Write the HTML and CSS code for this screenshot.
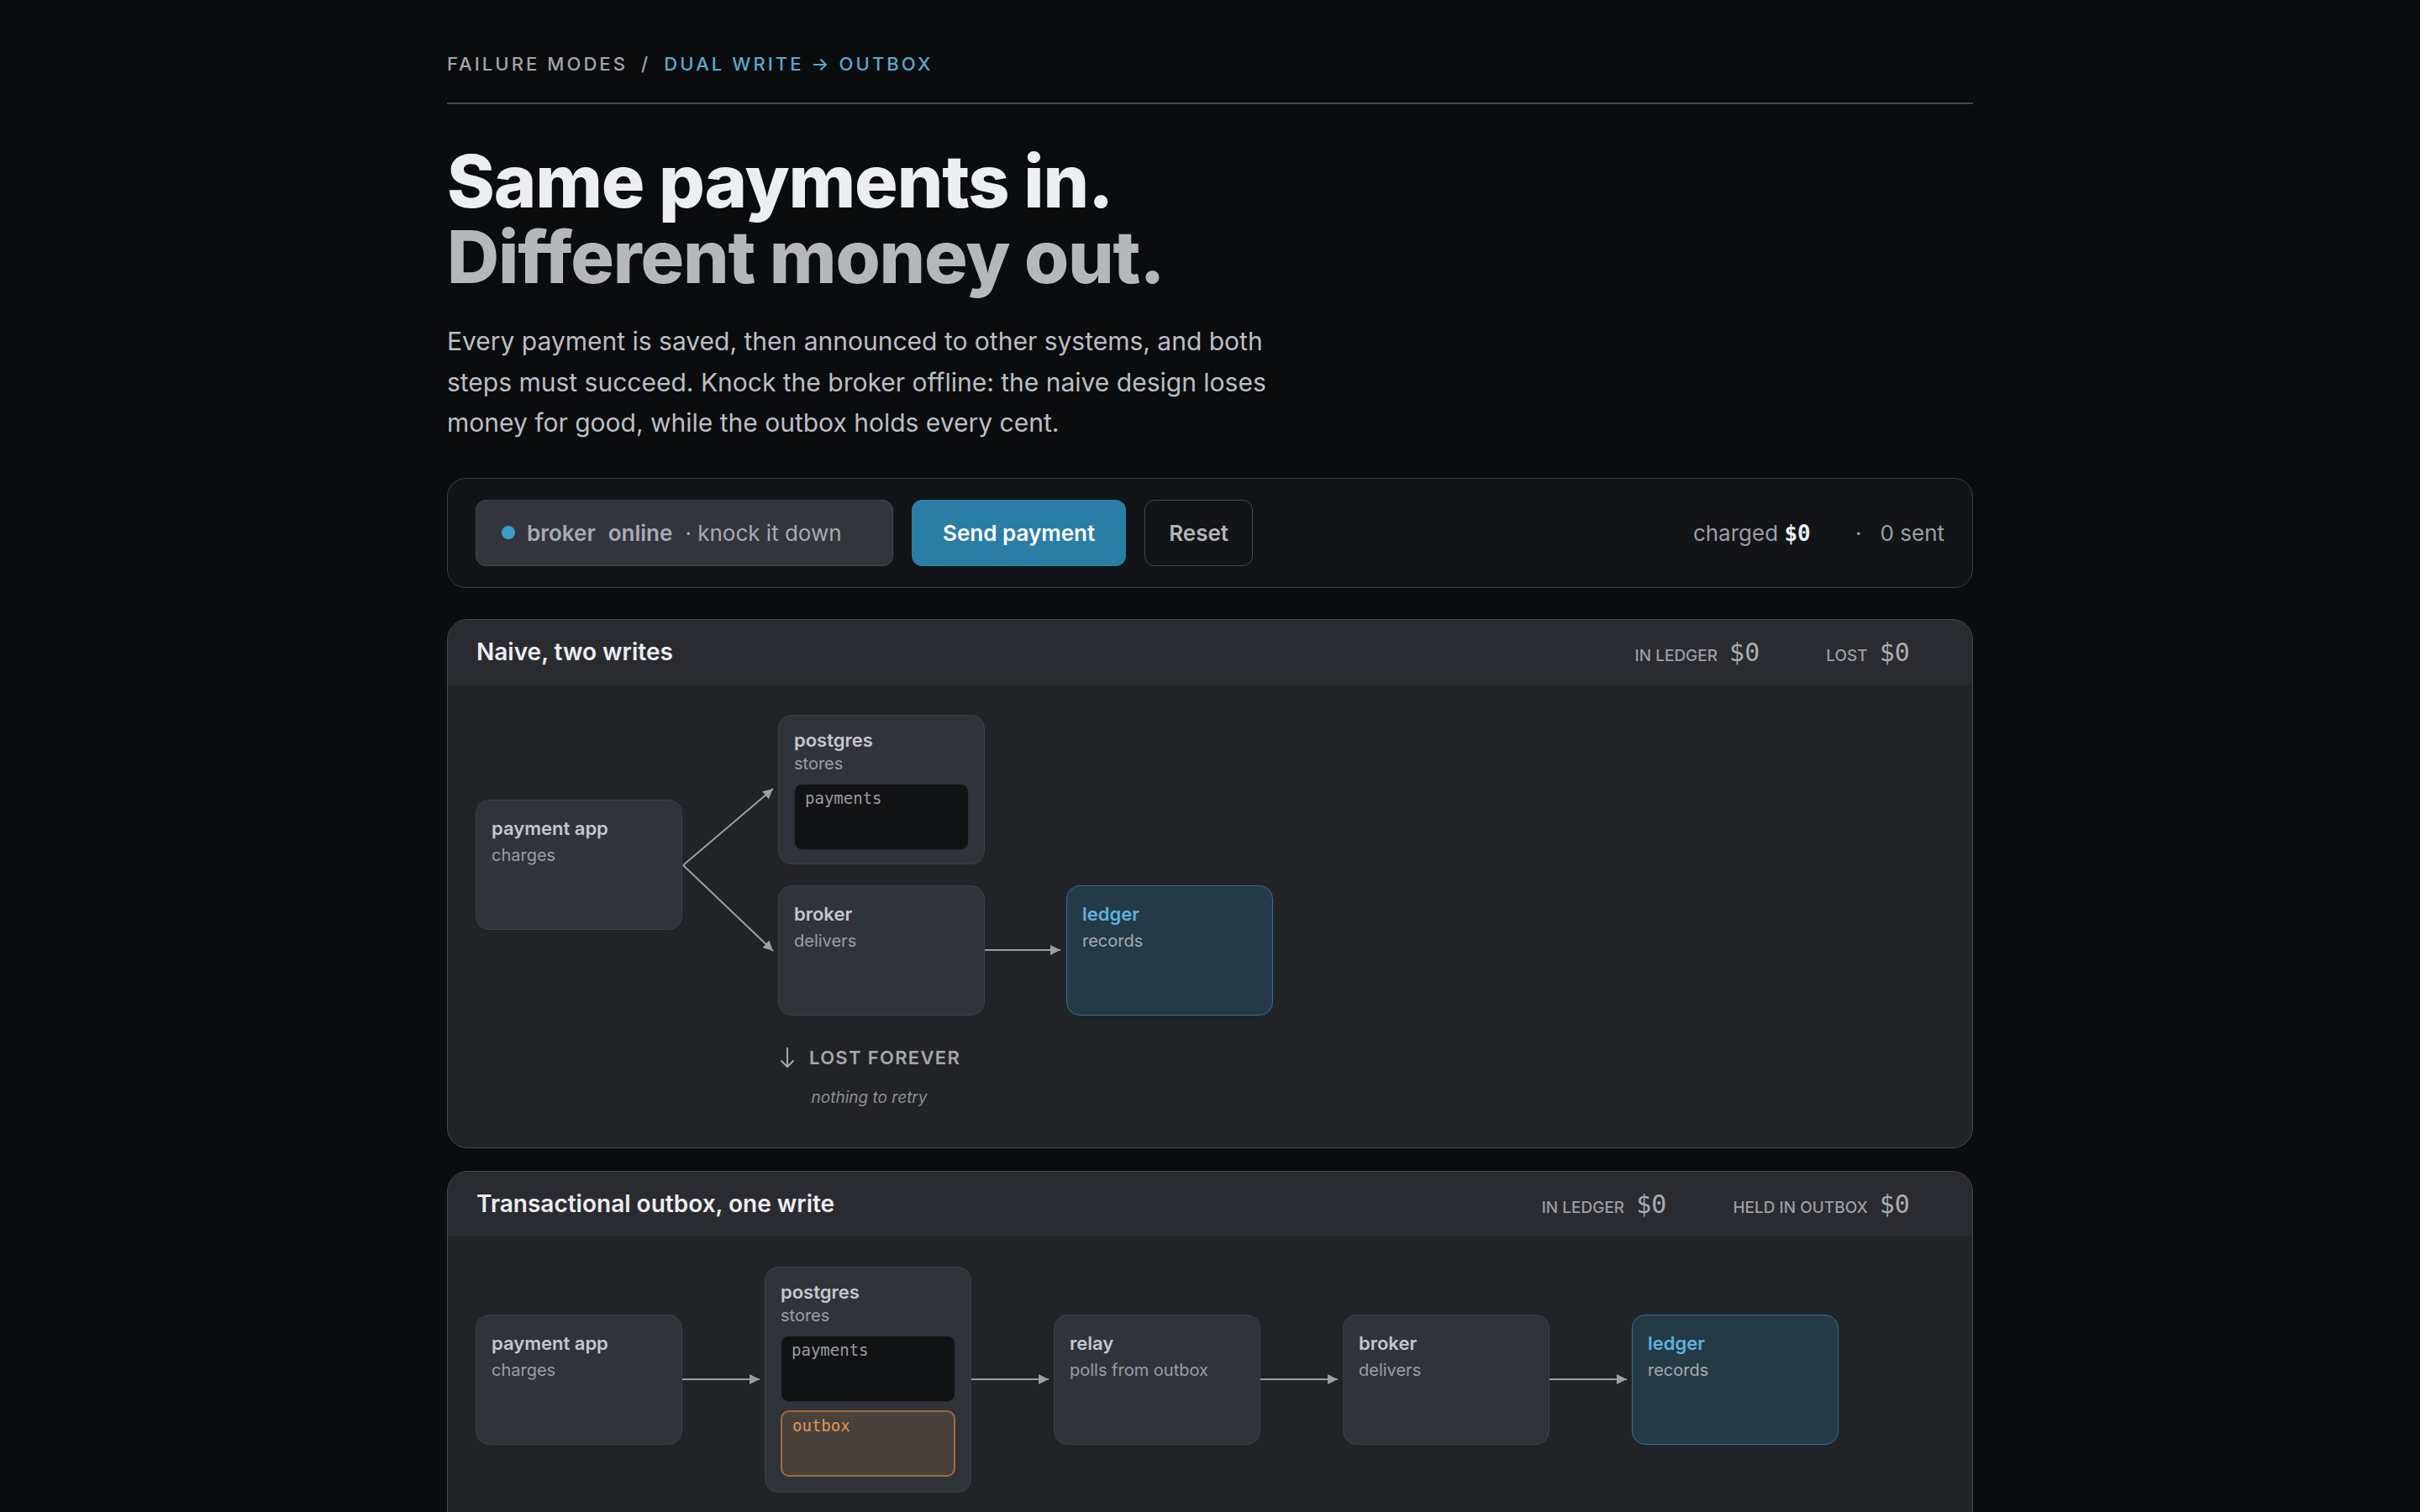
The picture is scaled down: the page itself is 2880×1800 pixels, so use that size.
FILE: index.html
```html
<!DOCTYPE html>
<html lang="en">
<head>
  <meta charset="UTF-8" />
  <meta name="viewport" content="width=device-width, initial-scale=1.0"/>
  <title>Failure modes: dual write vs outbox</title>
  <link rel="stylesheet" href="styles.css">
</head>
<body>
  <main class="page">
    <nav class="crumbs">
      <span>Failure modes</span>
      <span class="crumb-sep">/</span>
      <span class="crumb-current">Dual write → outbox</span>
    </nav>

    <h1 class="headline">
      <span class="headline-in">Same payments in.</span>
      <span class="headline-out">Different money out.</span>
    </h1>

    <p class="lede">Every payment is saved, then announced to other systems, and both steps must succeed. Knock the broker offline: the naive design loses money for good, while the outbox holds every cent.</p>

    <!-- controls -->
    <div class="controls">
      <button type="button" class="toggle">
        <span class="dot"></span>
        <b>broker</b>
        <b>online</b>
        <span>· knock it down</span>
      </button>
      <button type="button" class="btn btn-primary">Send payment</button>
      <button type="button" class="btn btn-ghost">Reset</button>
      <div class="totals">
        <span>charged <b class="money">$0</b></span>
        <span>·</span>
        <span>0 sent</span>
      </div>
    </div>

    <!-- naive: two writes -->
    <section class="card">
      <header class="card-head">
        <h2>Naive, two writes</h2>
        <div class="stats">
          <div class="stat"><span class="stat-label">In ledger</span><span class="stat-value">$0</span></div>
          <div class="stat"><span class="stat-label">Lost</span><span class="stat-value">$0</span></div>
        </div>
      </header>
      <div class="card-body">
        <div class="naive">
          <div class="node node-app">
            <div class="node-name">payment app</div>
            <div class="node-role">charges</div>
          </div>

          <svg class="fork" viewBox="0 0 114 358" width="114" height="358">
            <defs>
              <marker id="tip" viewBox="0 0 12 12" refX="12" refY="6" markerWidth="12" markerHeight="12" markerUnits="userSpaceOnUse" orient="auto">
                <path d="M0,0 L12,6 L0,12 z" fill="#9c9ea3"/>
              </marker>
            </defs>
            <line x1="1" y1="179" x2="108" y2="88" stroke="#9c9ea3" stroke-width="2" marker-end="url(#tip)"/>
            <line x1="1" y1="179" x2="108" y2="281" stroke="#9c9ea3" stroke-width="2" marker-end="url(#tip)"/>
          </svg>

          <div class="node node-store node-pg">
            <div class="node-name">postgres</div>
            <div class="node-role">stores</div>
            <div class="table">payments</div>
          </div>

          <div class="node node-broker">
            <div class="node-name">broker</div>
            <div class="node-role">delivers</div>
          </div>

          <svg class="link link-naive" viewBox="0 0 97 20" width="97" height="20">
            <line x1="0" y1="10" x2="90" y2="10" stroke="#9c9ea3" stroke-width="2" marker-end="url(#tip)"/>
          </svg>

          <div class="node node-ledger">
            <div class="node-name">ledger</div>
            <div class="node-role">records</div>
          </div>

          <div class="lost">
            <div class="lost-title">
              <svg width="22" height="28" viewBox="0 0 22 28"><path d="M11 2 V25 M3.5 17.5 L11 25 L18.5 17.5" fill="none" stroke="#a4a7ac" stroke-width="2"/></svg>
              Lost forever
            </div>
            <div class="lost-note">nothing to retry</div>
          </div>
        </div>
      </div>
    </section>

    <!-- transactional outbox -->
    <section class="card card-outbox">
      <header class="card-head">
        <h2>Transactional outbox, one write</h2>
        <div class="stats">
          <div class="stat"><span class="stat-label">In ledger</span><span class="stat-value">$0</span></div>
          <div class="stat"><span class="stat-label">Held in outbox</span><span class="stat-value">$0</span></div>
        </div>
      </header>
      <div class="card-body">
        <div class="flow">
          <div class="node">
            <div class="node-name">payment app</div>
            <div class="node-role">charges</div>
          </div>
          <svg class="link" viewBox="0 0 98 20" width="98" height="20">
            <line x1="0" y1="10" x2="92" y2="10" stroke="#9c9ea3" stroke-width="2" marker-end="url(#tip)"/>
          </svg>
          <div class="node node-store">
            <div class="node-name">postgres</div>
            <div class="node-role">stores</div>
            <div class="table">payments</div>
            <div class="table table-outbox">outbox</div>
          </div>
          <svg class="link" viewBox="0 0 98 20" width="98" height="20">
            <line x1="0" y1="10" x2="92" y2="10" stroke="#9c9ea3" stroke-width="2" marker-end="url(#tip)"/>
          </svg>
          <div class="node">
            <div class="node-name">relay</div>
            <div class="node-role">polls from outbox</div>
          </div>
          <svg class="link" viewBox="0 0 98 20" width="98" height="20">
            <line x1="0" y1="10" x2="92" y2="10" stroke="#9c9ea3" stroke-width="2" marker-end="url(#tip)"/>
          </svg>
          <div class="node">
            <div class="node-name">broker</div>
            <div class="node-role">delivers</div>
          </div>
          <svg class="link" viewBox="0 0 98 20" width="98" height="20">
            <line x1="0" y1="10" x2="92" y2="10" stroke="#9c9ea3" stroke-width="2" marker-end="url(#tip)"/>
          </svg>
          <div class="node node-ledger">
            <div class="node-name">ledger</div>
            <div class="node-role">records</div>
          </div>
        </div>
      </div>
    </section>
  </main>
</body>
</html>
```

FILE: styles.css
```css
* {
  box-sizing: border-box;
}

body {
  margin: 0;
  background: #0b0c0e;
  color: #eceef1;
  font-family: Inter, "Noto Sans", sans-serif;
}

.page {
  width: 1816px;
  margin: 0 auto;
  padding: 60px 0 80px;
}

/* breadcrumb */
.crumbs {
  display: flex;
  gap: 16px;
  font-size: 22px;
  line-height: 32px;
  font-weight: 500;
  letter-spacing: 0.14em;
  text-transform: uppercase;
  color: #a2a5ab;
  padding-bottom: 30px;
  border-bottom: 2px solid #45474d;
}

.crumb-current {
  color: #5aa9d0;
}

/* heading */
.headline {
  margin: 47px 0 0;
  font-size: 86px;
  line-height: 90px;
  font-weight: 800;
  letter-spacing: -0.013em;
}

.headline span {
  display: block;
}

.headline-in {
  color: #eceef1;
}

.headline-out {
  color: #b5b7bc;
}

.lede {
  margin: 31px 0 0;
  max-width: 990px;
  font-size: 30px;
  line-height: 48.5px;
  color: #bcbfc4;
}

/* control bar */
.controls {
  display: flex;
  align-items: center;
  gap: 22px;
  margin-top: 41px;
  padding: 25px 33px;
  background: #131417;
  border: 1px solid #3b3d43;
  border-radius: 22px;
}

.controls button {
  font-family: inherit;
  cursor: pointer;
}

.toggle {
  display: flex;
  align-items: center;
  gap: 15px;
  width: 497px;
  height: 79px;
  padding: 0 30px;
  background: #33353d;
  border: 1px solid #41444c;
  border-radius: 12px;
  font-size: 26px;
  color: #a8abb1;
}

.toggle b {
  font-weight: 600;
}

.dot {
  width: 16px;
  height: 16px;
  border-radius: 50%;
  background: #3a9cc8;
  margin-right: -1px;
}

.btn {
  height: 79px;
  font-size: 26px;
  font-weight: 600;
  border-radius: 12px;
}

.btn-primary {
  padding: 0 36px;
  background: #2a7ea6;
  border: 1px solid #2a7ea6;
  color: #ffffff;
}

.btn-ghost {
  padding: 0 28px;
  background: transparent;
  border: 1px solid #46484e;
  color: #b3b6bb;
}

.totals {
  margin-left: auto;
  display: flex;
  align-items: center;
  gap: 22px;
  font-size: 26px;
  color: #9c9fa5;
}

.money {
  display: inline-block;
  min-width: 4ch;
  font-family: "DejaVu Sans Mono", monospace;
  font-size: 26px;
  font-weight: 700;
  color: #eceef1;
}

/* cards */
.card {
  margin-top: 37px;
  background: #222327;
  border: 1px solid #46484e;
  border-radius: 24px;
  overflow: hidden;
}

.card-outbox {
  margin-top: 27px;
}

.card-head {
  display: flex;
  align-items: center;
  justify-content: space-between;
  height: 77px;
  padding: 0 38px 0 34px;
  background: #2a2b30;
}

.card-head h2 {
  margin: 0;
  font-size: 28px;
  font-weight: 600;
  color: #eceef1;
}

.stats {
  display: flex;
  gap: 43px;
}

.stat {
  display: flex;
  align-items: baseline;
  gap: 14px;
}

.stat-label {
  font-size: 19px;
  font-weight: 500;
  text-transform: uppercase;
  color: #9c9fa5;
}

.stat-value {
  min-width: 4ch;
  font-family: "DejaVu Sans Mono", monospace;
  font-size: 30px;
  color: #a9acb1;
}

.card-body {
  padding: 36px 33px 46px;
}

/* nodes */
.node {
  width: 246px;
  height: 155px;
  padding: 18px 18px 0;
  background: #31333b;
  border: 1px solid #3c3f47;
  border-radius: 16px;
  flex-shrink: 0;
}

.node-name {
  font-size: 22px;
  line-height: 30px;
  font-weight: 600;
  color: #c5c7cb;
}

.node-role {
  margin-top: 2px;
  font-size: 20px;
  line-height: 30px;
  color: #9b9ea4;
}

.node-store {
  height: auto;
  padding: 14px 18px 18px;
}

.node-store .node-role {
  margin-top: 0;
  line-height: 26px;
}

.table {
  height: 79px;
  margin-top: 11px;
  padding: 5px 12px;
  background: #111214;
  border: 1px solid #2b2d32;
  border-radius: 10px;
  font-family: "DejaVu Sans Mono", monospace;
  font-size: 19px;
  color: #9a9ca1;
}

.table-outbox {
  margin-top: 10px;
  background: #48413c;
  border: 2px solid #a56b3e;
  color: #e39554;
}

.node-ledger {
  background: #253a47;
  border-color: #2f7194;
}

.node-ledger .node-name {
  color: #5eb2dc;
}

.node-ledger .node-role {
  color: #a3aab1;
}

/* naive diagram */
.naive {
  display: grid;
  grid-template-columns: 246px 114px 246px 97px 246px;
  grid-template-rows: 178px 155px auto;
  row-gap: 25px;
}

.node-app {
  grid-column: 1;
  grid-row: 1 / span 2;
  align-self: center;
}

.fork {
  grid-column: 2;
  grid-row: 1 / span 2;
}

.node-pg {
  grid-column: 3;
  grid-row: 1;
}

.node-broker {
  grid-column: 3;
  grid-row: 2;
}

.link-naive {
  grid-column: 4;
  grid-row: 2;
  align-self: center;
}

.naive .node-ledger {
  grid-column: 5;
  grid-row: 2;
}

.lost {
  grid-column: 3;
  grid-row: 3;
  justify-self: start;
  display: flex;
  flex-direction: column;
  align-items: center;
  margin-top: 10px;
}

.lost-title {
  display: flex;
  align-items: center;
  gap: 15px;
  font-size: 22px;
  line-height: 30px;
  font-weight: 600;
  letter-spacing: 0.06em;
  text-transform: uppercase;
  color: #a4a7ac;
}

.lost-note {
  margin-top: 20px;
  font-size: 19px;
  line-height: 26px;
  font-style: italic;
  color: #8d9096;
}

/* outbox flow */
.flow {
  display: flex;
  align-items: center;
}

.link {
  flex-shrink: 0;
  display: block;
}
```
